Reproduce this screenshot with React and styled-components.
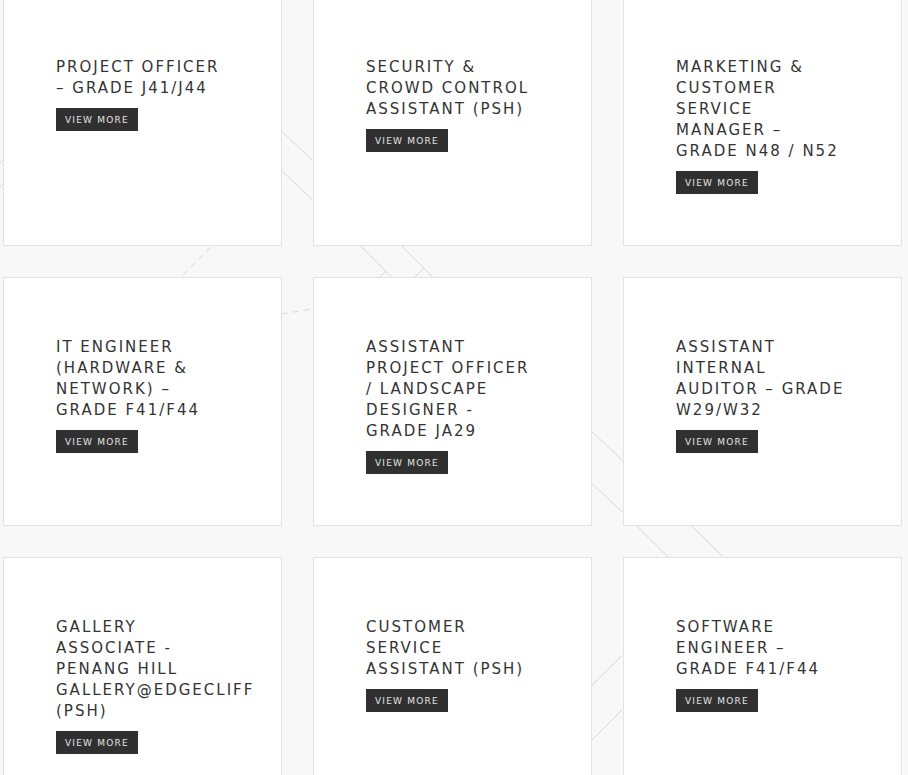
import React from "react"
import styled, { createGlobalStyle } from "styled-components"

const GlobalStyle = createGlobalStyle`
  html, body {
    margin: 0;
    padding: 0;
    background: #f8f8f8;
  }
  * {
    box-sizing: border-box;
  }
`

const Page = styled.div`
  position: relative;
  min-height: 100vh;
  overflow: hidden;
  padding-left: 3px;
`

const Pattern = styled.svg`
  position: absolute;
  top: 0;
  left: 0;
  width: 908px;
  height: 775px;
  z-index: 0;
  pointer-events: none;
`

const Grid = styled.div`
  position: relative;
  z-index: 1;
  margin-top: -3px;
  display: grid;
  grid-template-columns: repeat(3, 279px);
  column-gap: 31px;
  row-gap: 31px;
`

const Card = styled.div`
  height: 249px;
  background: #fff;
  border: 1px solid #e3e3e3;
  padding: 59px 52px 0;
  display: flex;
  flex-direction: column;
  align-items: flex-start;
`

const Title = styled.h3`
  margin: 0;
  font-family: "DejaVu Sans", "Liberation Sans", sans-serif;
  font-size: 15px;
  font-weight: 400;
  line-height: 21px;
  letter-spacing: 2px;
  color: #333;
  text-transform: uppercase;
`

const Line = styled.span`
  display: block;
  white-space: nowrap;
`

const MoreButton = styled.a`
  margin-top: 9px;
  height: 23px;
  padding: 0 9px 0 9px;
  display: inline-flex;
  align-items: center;
  background: #303030;
  color: #e4e4e4;
  font-family: "DejaVu Sans", "Liberation Sans", sans-serif;
  font-size: 9px;
  letter-spacing: 1.2px;
  text-transform: uppercase;
  text-decoration: none;
  cursor: pointer;
`

const jobs = [
  ["PROJECT OFFICER", "– GRADE J41/J44"],
  ["SECURITY &", "CROWD CONTROL", "ASSISTANT (PSH)"],
  ["MARKETING &", "CUSTOMER", "SERVICE", "MANAGER –", "GRADE N48 / N52"],
  ["IT ENGINEER", "(HARDWARE &", "NETWORK) –", "GRADE F41/F44"],
  ["ASSISTANT", "PROJECT OFFICER", "/ LANDSCAPE", "DESIGNER -", "GRADE JA29"],
  ["ASSISTANT", "INTERNAL", "AUDITOR – GRADE", "W29/W32"],
  ["GALLERY", "ASSOCIATE -", "PENANG HILL", "GALLERY@EDGECLIFF", "(PSH)"],
  ["CUSTOMER", "SERVICE", "ASSISTANT (PSH)"],
  ["SOFTWARE", "ENGINEER –", "GRADE F41/F44"],
]

// faint lines that show through the gutters
const strokes = [
  [282, 131.7, 312, 160],
  [282, 171, 312, 199.3],
  [360.7, 246, 391.7, 277],
  [401.7, 246, 432.7, 277],
  [380, 277, 386, 271],
  [415, 277, 424, 268],
  [591, 430.7, 622, 460],
  [591, 482.7, 622, 511.7],
  [636.7, 526, 668.3, 557],
  [691.7, 526, 723.3, 557],
  [591, 686, 622, 655.7],
  [591, 741, 622, 710],
  [0, 163, 3, 160],
  [0, 187, 3, 184],
]

const dashed = [
  [183, 275, 211, 247],
  [282, 314, 312, 309],
]

const App = () => (
  <>
    <GlobalStyle />
    <Page>
      <Pattern viewBox="0 0 908 775">
        {strokes.map(([x1, y1, x2, y2], i) => (
          <line key={i} x1={x1} y1={y1} x2={x2} y2={y2} stroke="#d6d6d6" strokeWidth="1" />
        ))}
        {dashed.map(([x1, y1, x2, y2], i) => (
          <line
            key={"d" + i}
            x1={x1}
            y1={y1}
            x2={x2}
            y2={y2}
            stroke="#d6d6d6"
            strokeWidth="1"
            strokeDasharray="6 5"
          />
        ))}
      </Pattern>
      <Grid>
        {jobs.map((lines, i) => (
          <Card key={i}>
            <Title>
              {lines.map(l => (
                <Line key={l}>{l}</Line>
              ))}
            </Title>
            <MoreButton>View More</MoreButton>
          </Card>
        ))}
      </Grid>
    </Page>
  </>
)

export default App
